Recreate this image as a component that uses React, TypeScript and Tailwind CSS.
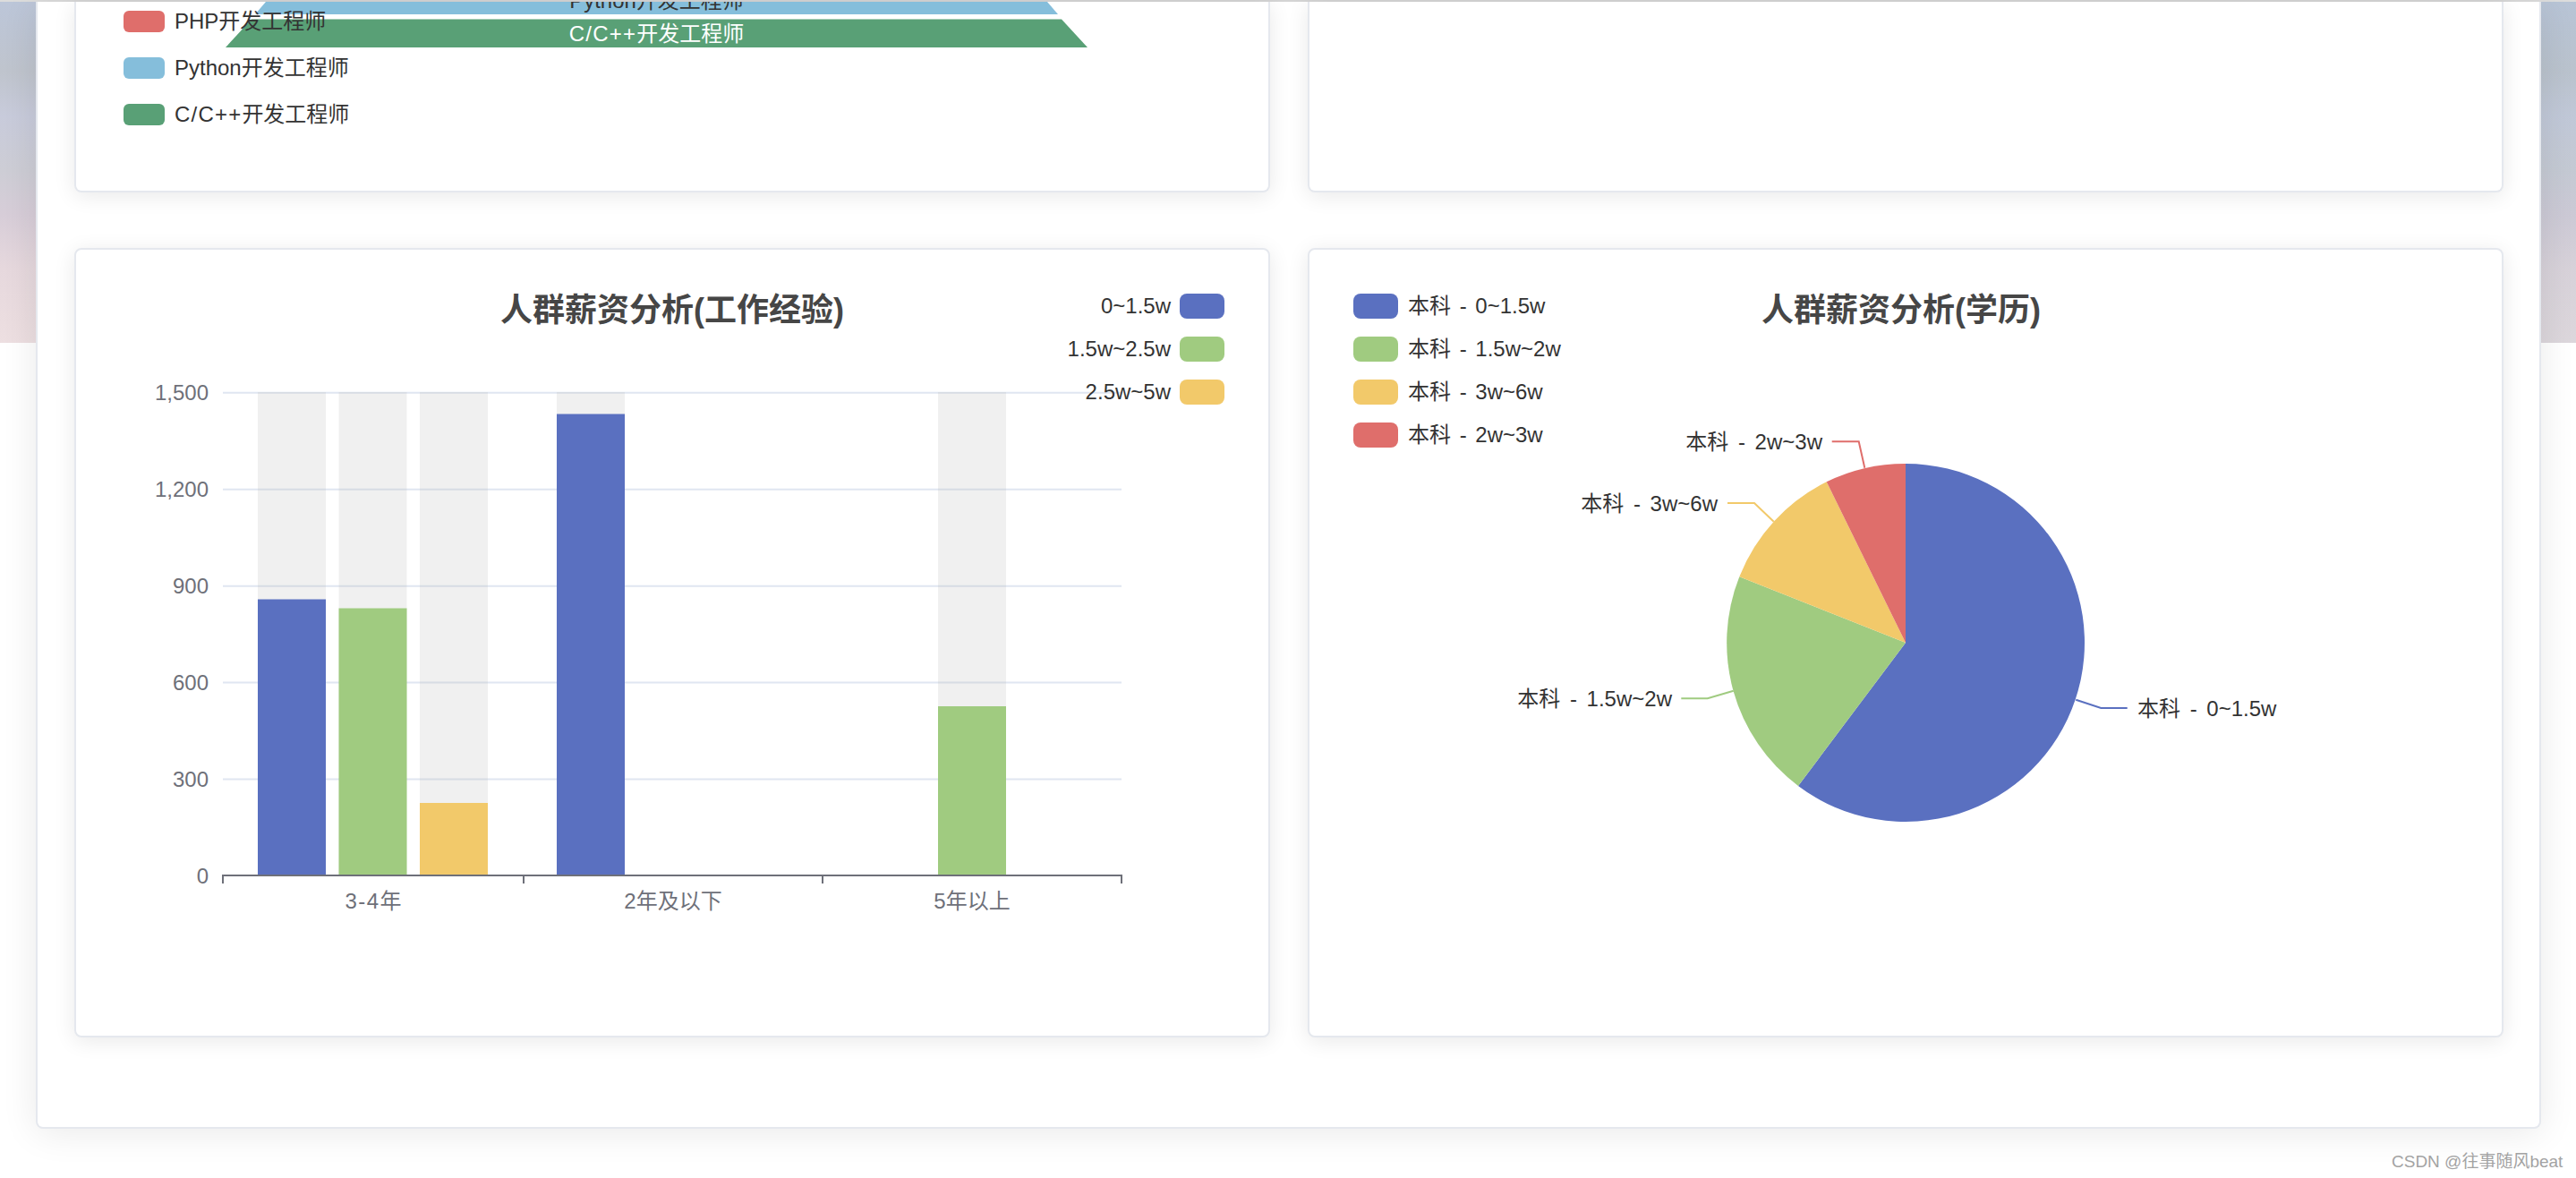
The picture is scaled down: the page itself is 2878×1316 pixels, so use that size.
import React from "react";

const BLUE = "#5a70c0";
const GREEN = "#a0cb80";
const YELLOW = "#f2c96a";
const RED = "#df6e6b";
const SKY = "#85bedb";
const TEAL = "#59a076";

function Swatch({ color, small }: { color: string; small?: boolean }) {
  return (
    <span
      className={small ? "block h-[24px] w-[46px] shrink-0 rounded-[6px]" : "block h-[28px] w-[50px] shrink-0 rounded-[8px]"}
      style={{ backgroundColor: color }}
    />
  );
}

function Card({ children, top }: { children?: React.ReactNode; top?: boolean }) {
  return (
    <div
      className={
        top
          ? "relative h-[213px] overflow-hidden rounded-b-[8px] border-x-2 border-b-2 border-[#e5e8ee] bg-white shadow-[0_4px_24px_0_rgba(0,0,0,0.09)]"
          : "relative h-[882px] rounded-[8px] border-2 border-[#e5e8ee] bg-white shadow-[0_4px_24px_0_rgba(0,0,0,0.09)]"
      }
    >
      {children}
    </div>
  );
}

function Title({ children }: { children: React.ReactNode }) {
  return (
    <div className="pt-[46px] text-center text-[36px] font-bold leading-[44px] text-[#464646]">{children}</div>
  );
}

function FunnelCard() {
  const items = [
    { c: RED, t: "PHP开发工程师", pre: "" },
    { c: SKY, t: "Python开发工程师", pre: "" },
    { c: TEAL, t: "开发工程师", pre: "C/C++" },
  ];
  return (
    <Card top>
      <svg viewBox="85 2 1332 211" width={1332} height={211} className="block">
        <polygon points="297,2 1170,2 1182,16 285,16" fill={SKY} />
        <polygon points="281,21.5 1186,21.5 1215,53 252,53" fill={TEAL} />
        <text x={733.5} y={0} textAnchor="middle" dominantBaseline="central" fontSize={24} fill="#333333">
          Python开发工程师
        </text>
        <text x={733.5} y={37} textAnchor="middle" dominantBaseline="central" fontSize={24} fill="#ffffff">
          <tspan letterSpacing={1.2}>C/C++</tspan>开发工程师
        </text>
      </svg>
      <div className="absolute left-[53px] top-[10px] flex flex-col gap-[28px]">
        {items.map((i) => (
          <div key={i.t + i.pre} className="flex h-[24px] items-center gap-[13px] text-[24px] leading-[24px] text-[#333333]">
            <Swatch color={i.c} small />
            <span className="-ml-[2px]">
              {i.pre ? <span className="tracking-[1.2px]">{i.pre}</span> : null}
              {i.t}
            </span>
          </div>
        ))}
      </div>
    </Card>
  );
}

function BarChart() {
  const gridY = [438.7, 546.8, 654.8, 762.4, 870.4];
  const yLabels = [
    { y: 438.7, t: "1,500" },
    { y: 546.8, t: "1,200" },
    { y: 654.8, t: "900" },
    { y: 762.4, t: "600" },
    { y: 870.4, t: "300" },
    { y: 978, t: "0" },
  ];
  const bars = [
    { x: 288, top: 669.5, c: BLUE },
    { x: 378.5, top: 679.5, c: GREEN },
    { x: 469, top: 897, c: YELLOW },
    { x: 622, top: 462.5, c: BLUE },
    { x: 1048, top: 789, c: GREEN },
  ];
  return (
    <svg viewBox="85 369 1332 788" width={1332} height={788} className="block">
      {gridY.map((y) => (
        <line key={y} x1={249} x2={1253} y1={y} y2={y} stroke="#e0e6f1" strokeWidth={2} />
      ))}
      {bars.map((b) => (
        <g key={b.x}>
          <rect x={b.x} y={438} width={76} height={540} fill="rgba(180,180,180,0.2)" />
          <rect x={b.x} y={b.top} width={76} height={978 - b.top} fill={b.c} />
        </g>
      ))}
      <line x1={248} x2={1254} y1={978} y2={978} stroke="#6e7079" strokeWidth={2} />
      {[249, 585, 919, 1253].map((x) => (
        <line key={x} x1={x} x2={x} y1={978} y2={987} stroke="#6e7079" strokeWidth={2} />
      ))}
      {yLabels.map((l) => (
        <text key={l.t} x={233} y={l.y} textAnchor="end" dominantBaseline="central" fontSize={24} fill="#6e7079">
          {l.t}
        </text>
      ))}
      <text x={417} y={1006} textAnchor="middle" dominantBaseline="central" fontSize={24} fill="#6e7079">
        <tspan letterSpacing={1.5}>3-4</tspan>年
      </text>
      <text x={752} y={1006} textAnchor="middle" dominantBaseline="central" fontSize={24} fill="#6e7079">
        2年及以下
      </text>
      <text x={1086} y={1006} textAnchor="middle" dominantBaseline="central" fontSize={24} fill="#6e7079">
        5年以上
      </text>
    </svg>
  );
}

function BarCard() {
  const items = [
    { c: BLUE, t: "0~1.5w" },
    { c: GREEN, t: "1.5w~2.5w" },
    { c: YELLOW, t: "2.5w~5w" },
  ];
  return (
    <Card>
      <Title>人群薪资分析(工作经验)</Title>
      <BarChart />
      <div className="absolute right-[49px] top-[49px] flex flex-col items-end gap-[20px]">
        {items.map((i) => (
          <div key={i.t} className="flex h-[28px] items-center gap-[10px] text-[24px] leading-[28px] text-[#333333]">
            <span>{i.t}</span>
            <Swatch color={i.c} />
          </div>
        ))}
      </div>
    </Card>
  );
}

function PieChart() {
  const labels = [
    { pts: "2319.3,781.7 2347.3,791 2376.7,791", c: BLUE, x: 2388, y: 791, a: "start", t: "本科 - 0~1.5w" },
    { pts: "1936.7,771.7 1907.7,780.3 1878.3,780.3", c: GREEN, x: 1868, y: 780.3, a: "end", t: "本科 - 1.5w~2w" },
    { pts: "1981.7,582.7 1960,562 1930,562", c: YELLOW, x: 1919, y: 562, a: "end", t: "本科 - 3w~6w" },
    { pts: "2083.3,522.7 2076.7,493.3 2046.7,493.3", c: RED, x: 2036, y: 493.3, a: "end", t: "本科 - 2w~3w" },
  ];
  return (
    <svg viewBox="1463 369 1332 788" width={1332} height={788} className="block">
      <path d="M2129 718 L2129 518 A200 200 0 1 1 2009 878 Z" fill={BLUE} />
      <path d="M2129 718 L2009 878 A200 200 0 0 1 1943.3 644.3 Z" fill={GREEN} />
      <path d="M2129 718 L1943.3 644.3 A200 200 0 0 1 2040.7 538.3 Z" fill={YELLOW} />
      <path d="M2129 718 L2040.7 538.3 A200 200 0 0 1 2129 518 Z" fill={RED} />
      {labels.map((l) => (
        <g key={l.t}>
          <polyline points={l.pts} fill="none" stroke={l.c} strokeWidth={2} />
          <text
            x={l.x}
            y={l.y}
            textAnchor={l.a as "start" | "end"}
            dominantBaseline="central"
            fontSize={24}
            fill="#333333"
            className="[word-spacing:4px]"
          >
            {l.t}
          </text>
        </g>
      ))}
    </svg>
  );
}

function PieCard() {
  const items = [
    { c: BLUE, t: "本科 - 0~1.5w" },
    { c: GREEN, t: "本科 - 1.5w~2w" },
    { c: YELLOW, t: "本科 - 3w~6w" },
    { c: RED, t: "本科 - 2w~3w" },
  ];
  return (
    <Card>
      <Title>
        <span className="relative -left-[5px]">人群薪资分析(学历)</span>
      </Title>
      <PieChart />
      <div className="absolute left-[49px] top-[49px] flex flex-col gap-[20px]">
        {items.map((i) => (
          <div
            key={i.t}
            className="flex h-[28px] items-center gap-[11px] text-[24px] leading-[28px] text-[#333333] [word-spacing:3px]"
          >
            <Swatch color={i.c} />
            <span>{i.t}</span>
          </div>
        ))}
      </div>
    </Card>
  );
}

export default function App() {
  return (
    <div className="relative min-h-[1316px] overflow-hidden bg-white bg-[linear-gradient(to_right,rgba(170,190,205,0)_0%,rgba(170,190,205,0.25)_100%),linear-gradient(to_bottom,#bcc6d9_0px,#bfc4cd_80px,#c8cbdb_130px,#cdcdd5_190px,#d7cdd8_240px,#e6d8dd_300px,#eddfe1_383px)] bg-[length:100%_383px] bg-no-repeat [font-family:'Liberation_Sans','Noto_Sans_CJK_SC',sans-serif]">
      <div className="h-[2px] bg-[#dcdcdc]" />
      <div className="ml-[40px] w-[2799px] rounded-b-[8px] border-x-2 border-b-2 border-[#e5e8ee] bg-white pb-[100px] pl-[41px] pr-[40px] shadow-[0_4px_40px_0_rgba(0,0,0,0.09)]">
        <div className="grid grid-cols-2 gap-x-[42px] gap-y-[62px]">
          <FunnelCard />
          <Card top />
          <BarCard />
          <PieCard />
        </div>
      </div>
      <div className="absolute left-[2672px] top-[1286px] text-[19px] leading-[24px] text-[#a3a3a3]">
        CSDN @往事随风beat
      </div>
    </div>
  );
}
